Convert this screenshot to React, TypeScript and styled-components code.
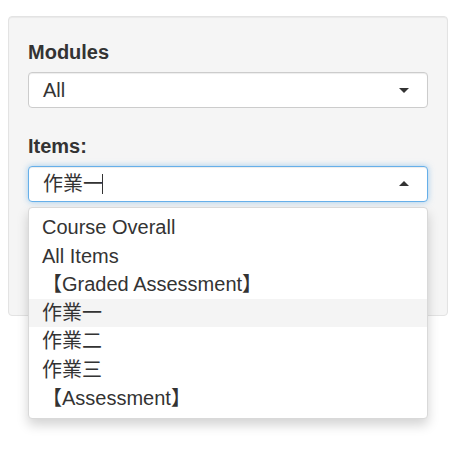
import React from "react";
import styled, { createGlobalStyle } from "styled-components";

const GlobalStyle = createGlobalStyle`
  html, body {
    margin: 0;
    padding: 0;
    background: #ffffff;
  }
  body {
    font-family: "Liberation Sans", Arial, "Noto Sans CJK TC", sans-serif;
    color: #333333;
  }
`;

const Page = styled.div`
  box-sizing: border-box;
  min-height: 456px;
  padding: 16px 10px 0 8px;
`;

const Well = styled.div`
  box-sizing: border-box;
  width: 440px;
  min-height: 300px;
  padding: 19px;
  background: #f5f5f5;
  border: 1px solid #e3e3e3;
  border-radius: 4px;
  box-shadow: inset 0 1px 1px rgba(0, 0, 0, 0.05);
`;

const FormGroup = styled.div`
  margin-bottom: 24px;
`;

const Label = styled.label`
  display: block;
  margin: 2px 0 6px;
  font-size: 20px;
  line-height: 28px;
  font-weight: 700;
  color: #333333;
`;

const Control = styled.div`
  position: relative;
`;

const SelectBox = styled.div<{ $focused?: boolean }>`
  box-sizing: border-box;
  display: flex;
  align-items: center;
  height: 36px;
  padding: 0 18px 0 14px;
  background: #ffffff;
  border: 1px solid ${(p) => (p.$focused ? "#66afe9" : "#cccccc")};
  border-radius: 4px;
  font-size: 20px;
  line-height: 22px;
  color: #333333;
  box-shadow: ${(p) =>
    p.$focused
      ? "inset 0 1px 1px rgba(0,0,0,.075), 0 0 6px rgba(102,175,233,.6)"
      : "inset 0 1px 1px rgba(0,0,0,.075)"};
`;

const Value = styled.div`
  flex: 1;
  display: flex;
  align-items: center;
  font-family: "Liberation Sans", Arial, "Noto Sans CJK TC", sans-serif;
`;

const TextCaret = styled.span`
  display: inline-block;
  width: 1px;
  height: 20px;
  margin-left: -1px;
  background: #333333;
`;

const Arrow = styled.span<{ $up?: boolean }>`
  width: 0;
  height: 0;
  border-left: 5px solid transparent;
  border-right: 5px solid transparent;
  ${(p) =>
    p.$up
      ? "border-bottom: 5px solid #333333; margin-top: -2px;"
      : "border-top: 5px solid #333333;"}
`;

const Dropdown = styled.div`
  position: absolute;
  top: calc(100% + 5px);
  left: 0;
  right: 0;
  z-index: 10;
  padding: 5px 0;
  background: #ffffff;
  border: 1px solid #d9d9d9;
  border-radius: 4px;
  box-shadow: 0 6px 12px rgba(0, 0, 0, 0.175);
`;

const Option = styled.div<{ $active?: boolean }>`
  padding: 0 13px;
  font-size: 20px;
  line-height: 28.5px;
  height: 28.5px;
  white-space: nowrap;
  color: #333333;
  background: ${(p) => (p.$active ? "#f4f4f4" : "transparent")};
`;

const options = [
  "Course Overall",
  "All Items",
  "【Graded Assessment】",
  "作業一",
  "作業二",
  "作業三",
  "【Assessment】",
];

export default function App() {
  return (
    <>
      <GlobalStyle />
      <Page>
        <Well>
          <FormGroup>
            <Label>Modules</Label>
            <Control>
              <SelectBox>
                <Value>All</Value>
                <Arrow />
              </SelectBox>
            </Control>
          </FormGroup>
          <FormGroup>
            <Label>Items:</Label>
            <Control>
              <SelectBox $focused>
                <Value>
                  作業一
                  <TextCaret />
                </Value>
                <Arrow $up />
              </SelectBox>
              <Dropdown>
                {options.map((o) => (
                  <Option key={o} $active={o === "作業一"}>
                    {o}
                  </Option>
                ))}
              </Dropdown>
            </Control>
          </FormGroup>
        </Well>
      </Page>
    </>
  );
}
